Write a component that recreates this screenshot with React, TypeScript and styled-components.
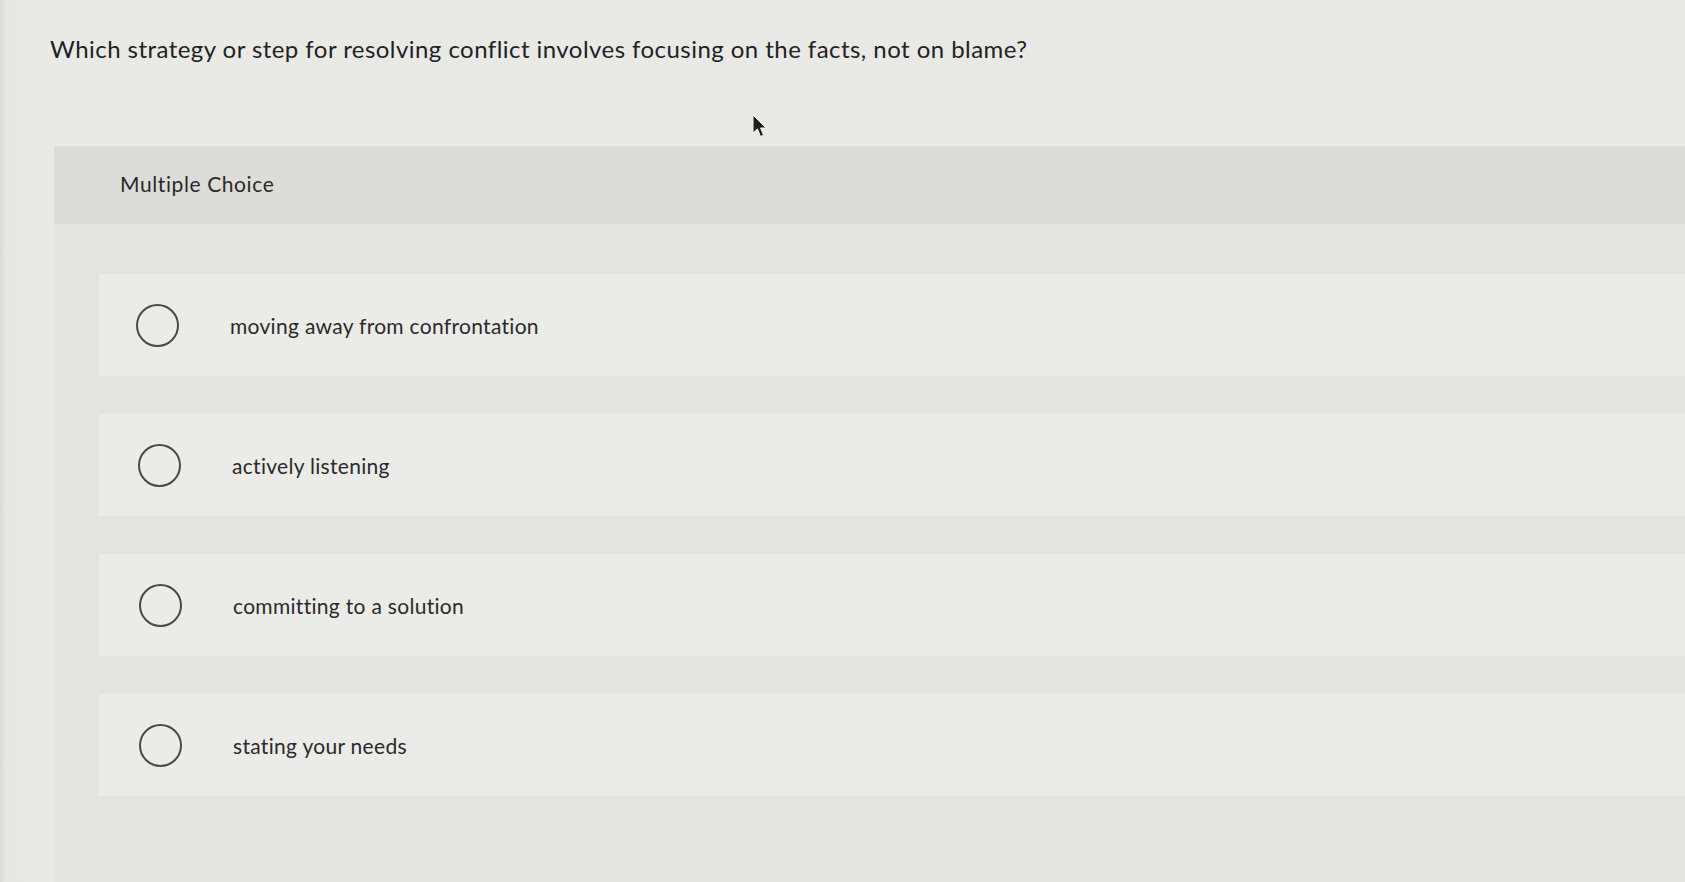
import React from "react";
import styled, { createGlobalStyle } from "styled-components";

const Global = createGlobalStyle`
  html, body { margin: 0; padding: 0; }
  body {
    background: #e8e8e5;
    font-family: Lato, "Open Sans", Arial, sans-serif;
    color: #2b2b2b;
    overflow: hidden;
  }
`;

const Page = styled.div`
  position: relative;
  width: 1685px;
  height: 882px;
  padding-top: 33px;
  box-sizing: border-box;
  background: linear-gradient(90deg, #d9d9d6 0px, #e6e6e3 6px, #e9e9e6 40px, #e8e8e5 100%);
`;

const Question = styled.h1`
  margin: 0 0 0 50px;
  font-size: 24px;
  line-height: 32px;
  font-weight: 400;
  color: #222;
  letter-spacing: 0.45px;
`;

const Panel = styled.section`
  margin: 81px 0 0 54px;
  background: #e3e3e0;
  min-height: 760px;
`;

const Header = styled.div`
  height: 78px;
  display: flex;
  align-items: center;
  padding-left: 66px;
  background: #dcdcd9;
  font-size: 21px;
  letter-spacing: 0.6px;
  color: #2a2a2a;
  padding-bottom: 3px;
  box-sizing: border-box;
`;

const Options = styled.div`
  display: flex;
  flex-direction: column;
  gap: 38px;
  padding: 50px 0 0 45px;
`;

const Row = styled.label<{ $shift: number }>`
  height: 102px;
  display: flex;
  align-items: center;
  gap: 51px;
  padding-left: ${(p) => 37 + p.$shift}px;
  background: #ebebe8;
  cursor: pointer;
`;

const Radio = styled.span`
  width: 39px;
  height: 39px;
  border-radius: 50%;
  border: 2.3px solid #4a4a4a;
  flex: none;
`;

const OptionText = styled.span`
  font-size: 21px;
  color: #2a2a2a;
  letter-spacing: 0.3px;
`;

const Cursor = styled.svg`
  position: absolute;
  left: 752px;
  top: 114px;
  width: 15px;
  height: 24px;
`;

const options = [
  "moving away from confrontation",
  "actively listening",
  "committing to a solution",
  "stating your needs",
];

export default function App() {
  return (
    <>
      <Global />
      <Page>
        <Question>
          Which strategy or step for resolving conflict involves focusing on the facts, not on blame?
        </Question>
        <Panel>
          <Header>Multiple Choice</Header>
          <Options>
            {options.map((o, i) => (
              <Row key={o} $shift={i === 0 ? 0 : 1 + Math.min(i, 2)}>
                <Radio />
                <OptionText>{o}</OptionText>
              </Row>
            ))}
          </Options>
        </Panel>
        <Cursor viewBox="0 0 15 24">
          <path d="M1 1 L1 19 L5.5 15 L8.5 22.5 L11.5 21.2 L8.6 14 L14 14 Z" fill="#1e1e1e" stroke="#f2f2f2" strokeWidth="1" />
        </Cursor>
      </Page>
    </>
  );
}
